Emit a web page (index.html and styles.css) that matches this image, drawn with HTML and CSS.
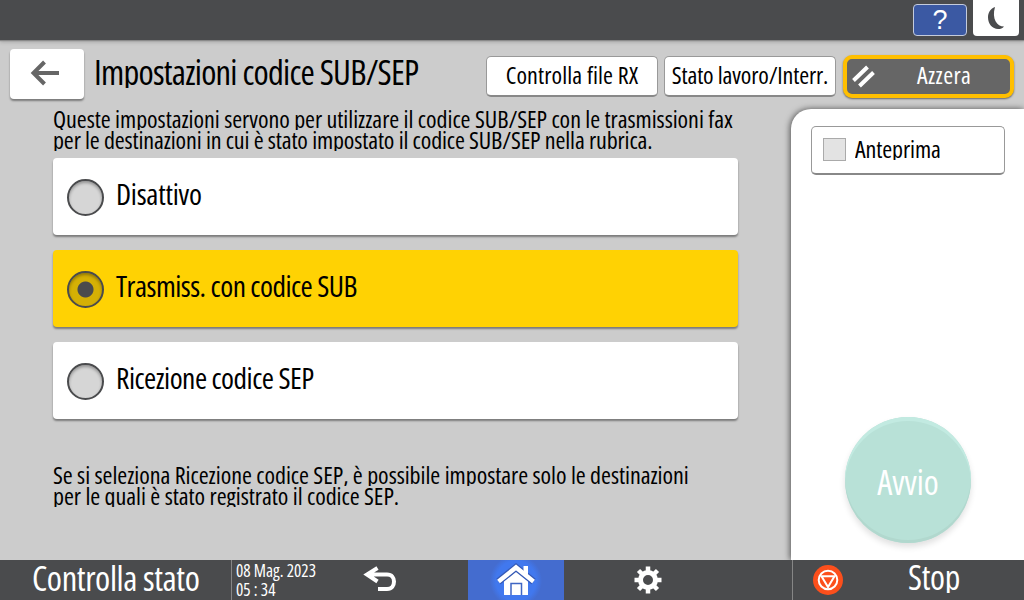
FILE: index.html
```html
<!DOCTYPE html>
<html lang="it">
<head>
    <meta charset="UTF-8">
    <meta name="viewport" content="width=device-width, initial-scale=1.0">
    <title>Impostazioni codice SUB/SEP</title>
    <link rel="stylesheet" href="styles.css">
</head>
<body>
    <!-- Top bar -->
    <div class="topbar">
        <button class="help-btn">?</button>
        <button class="sleep-btn">
            <svg width="20" height="24" viewBox="0 0 20 24"><path d="M9 1 C4 3 2 7 2 11.500 C2 18 6.500 23 12 23 C14.500 23 16.500 22.500 18 20.500 C11 20.500 5.500 13 9 1 Z" fill="#4a4b4d"/></svg>
        </button>
    </div>

    <!-- Title and commands -->
    <div class="header">
        <button class="back-btn">
            <svg width="30" height="26" viewBox="0 0 30 26"><path d="M29 13 H4 M14.500 2 L3.500 13 L14.500 24" fill="none" stroke="#666" stroke-width="4"/></svg>
        </button>
        <h1>Impostazioni codice SUB/SEP</h1>
        <button class="cmd-btn">Controlla file RX</button>
        <button class="cmd-btn status">Stato lavoro/Interr.</button>
        <button class="reset-btn">
            <svg width="23" height="24" viewBox="0 0 23 24"><path d="M1.500 15.500 L15.500 2 M7.500 21 L21.500 7.500" stroke="#fff" stroke-width="4"/></svg>
            <span>Azzera</span>
        </button>
    </div>

    <div class="main">
        <div class="content">
            <div class="text">
                <div class="line">Queste impostazioni servono per utilizzare il codice SUB/SEP con le trasmissioni fax</div>
                <div class="line tight">per le destinazioni in cui è stato impostato il codice SUB/SEP nella rubrica.</div>
            </div>

            <div class="options">
                <div class="option"><span class="radio"></span><span class="label short">Disattivo</span></div>
                <div class="option selected"><span class="radio"></span><span class="label">Trasmiss. con codice SUB</span></div>
                <div class="option"><span class="radio"></span><span class="label">Ricezione codice SEP</span></div>
            </div>

            <div class="text">
                <div class="line">Se si seleziona Ricezione codice SEP, è possibile impostare solo le destinazioni</div>
                <div class="line">per le quali è stato registrato il codice SEP.</div>
            </div>
        </div>

        <!-- Right panel -->
        <div class="panel">
            <button class="preview-btn"><span class="checkbox"></span><span class="preview-label">Anteprima</span></button>
            <button class="start-btn">Avvio</button>
        </div>
    </div>

    <!-- Bottom bar -->
    <div class="footer">
        <div class="check-status">Controlla stato</div>
        <div class="clock">
            <div>08 Mag. 2023</div>
            <div>05 : 34</div>
        </div>
        <div class="nav return">
            <svg width="34" height="28" viewBox="0 0 34 28"><path d="M14.500 2 L4 8.500 L14.500 15.500 M4 8.500 H24 C29 8.500 31 12 31 15.500 C31 19.500 29 23 24 23 H15" fill="none" stroke="#fff" stroke-width="4"/></svg>
        </div>
        <div class="nav home">
            <svg width="40" height="34" viewBox="0 0 40 34">
                <path d="M8 18 L20 8 L32 18 V32 H8 Z" fill="#fff"/>
                <path d="M2.500 18.500 L20 4.500 L37.500 18.500" fill="none" stroke="#3559b5" stroke-width="7"/>
                <path d="M27.500 3 H32 V13 H27.500 Z" fill="#fff"/>
                <path d="M2.500 18.500 L20 4.500 L37.500 18.500" fill="none" stroke="#fff" stroke-width="4.500"/>
                <path d="M15 32 V20.500 H25.500 V32" fill="#fff" stroke="#3f66c4" stroke-width="1.500"/>
            </svg>
        </div>
        <div class="nav settings">
            <svg width="28" height="28" viewBox="-14 -14 28 28">
                <circle r="7.500" fill="none" stroke="#fff" stroke-width="5"/>
                <path d="M0 -13.500 V-8 M0 13.500 V8 M-13.500 0 H-8 M13.500 0 H8 M-9.500 -9.500 L-6 -6 M9.500 -9.500 L6 -6 M-9.500 9.500 L-6 6 M9.500 9.500 L6 6" stroke="#fff" stroke-width="4.500"/>
            </svg>
        </div>
        <div class="stop">
            <svg width="30" height="30" viewBox="-15 -15 30 30">
                <circle r="15" fill="#fc4f1c"/>
                <circle r="9.300" fill="none" stroke="#fff" stroke-width="2"/>
                <path d="M-6.500 -3.800 H6.500 L0 7 Z" fill="none" stroke="#fff" stroke-width="2"/>
            </svg>
            <span>Stop</span>
        </div>
    </div>
</body>
</html>
```

FILE: styles.css
```css
* {
    box-sizing: border-box;
}
body {
    margin: 0;
    width: 1024px;
    height: 600px;
    overflow: hidden;
    display: flex;
    flex-direction: column;
    background-color: #ccc;
    color: #000;
    font-family: "Open Sans", "Noto Sans", sans-serif;
    font-stretch: 75%;
    font-size: 24px;
}
button {
    font: inherit;
    color: inherit;
    margin: 0;
    padding: 0;
    border: none;
    background-color: #fff;
    white-space: nowrap;
}
svg {
    display: block;
}

/* top bar */
.topbar {
    height: 40px;
    display: flex;
    justify-content: flex-end;
    padding-right: 5px;
    background-color: #4a4b4d;
    box-shadow: 0 1px 1px #8a8a8a, 0 2px 4px rgba(0, 0, 0, 0.2);
}
.help-btn {
    width: 54px;
    height: 32px;
    margin: 4px 6px 0 0;
    border: 1px solid #c4cbdc;
    border-radius: 4px;
    background-color: #3b59a3;
    color: #fff;
    font-family: "Liberation Sans", sans-serif;
    font-size: 27px;
    line-height: 30px;
}
.sleep-btn {
    width: 46px;
    height: 36px;
    padding-left: 13px;
    border-radius: 0 0 4px 4px;
}

/* header */
.header {
    height: 69px;
    display: flex;
    align-items: flex-start;
    padding: 9px 10px 0;
}
.back-btn {
    width: 74px;
    height: 50px;
    display: flex;
    align-items: center;
    padding: 0 0 2px 20px;
    border-radius: 4px;
    box-shadow: 0 2px 2px rgba(0, 0, 0, 0.4);
}
h1 {
    width: 402px;
    height: 38px;
    margin: 1px 0 0;
    padding-left: 10px;
    overflow: hidden;
    font-size: 34.5px;
    font-weight: 400;
    line-height: 43px;
    letter-spacing: -0.75px;
    white-space: nowrap;
}
.cmd-btn {
    width: 172px;
    height: 41px;
    margin: 7px 6px 0 0;
    padding-bottom: 2px;
    border: 1px solid #999;
    border-bottom: 2px solid #888;
    border-radius: 5px;
    line-height: 36px;
    letter-spacing: 0.12px;
}
.cmd-btn.status {
    letter-spacing: -0.15px;
}
.reset-btn {
    width: 171px;
    height: 43px;
    margin-top: 6px;
    margin-left: 1px;
    display: flex;
    align-items: center;
    padding-left: 5px;
    border: 4px solid #ffbf00;
    border-radius: 9px;
    background-color: #666;
    box-shadow: 0 1px 2px rgba(0, 0, 0, 0.5);
    color: #fff;
    letter-spacing: 0.4px;
}
.reset-btn span {
    margin-left: 42px;
    padding-bottom: 4px;
}

/* main area */
.main {
    height: 451px;
    display: flex;
}
.content {
    width: 791px;
    padding-left: 53px;
}
.line {
    height: 21px;
    overflow: hidden;
    line-height: 19px;
    white-space: nowrap;
    letter-spacing: -0.04px;
}
.line.tight {
    letter-spacing: -0.13px;
}
.options {
    width: 685px;
    margin: 7px 0 46px;
    display: flex;
    flex-direction: column;
    gap: 15px;
}
.option {
    height: 77px;
    display: flex;
    padding-left: 14px;
    background-color: #fff;
    border-radius: 4px;
    box-shadow: 0 2px 2px rgba(0, 0, 0, 0.4);
}
.option.selected {
    background-color: #ffd203;
}
.radio {
    width: 37px;
    height: 37px;
    margin: 21px 12px 0 0;
    border: 2px solid #4a4b4d;
    border-radius: 50%;
    background-color: #d6d6d6;
    box-shadow: inset 0 2px 3px rgba(0, 0, 0, 0.3);
}
.selected .radio {
    background: radial-gradient(circle, #4a4b4d 7.5px, #d5b005 8.5px);
}
.label {
    font-size: 29.5px;
    line-height: 72px;
    letter-spacing: -0.52px;
}
.label.short {
    letter-spacing: -0.25px;
}

/* right panel */
.panel {
    width: 233px;
    display: flex;
    flex-direction: column;
    align-items: flex-start;
    padding: 17px 0 0 20px;
    background-color: #fff;
    border-top-left-radius: 20px;
    box-shadow: -1px 0 6px rgba(0, 0, 0, 0.6);
}
.preview-btn {
    width: 194px;
    height: 49px;
    display: flex;
    align-items: flex-start;
    padding: 11px 0 0 11px;
    border: 1px solid #999;
    border-bottom: 2px solid #888;
    border-radius: 5px;
}
.checkbox {
    width: 23px;
    height: 23px;
    margin-right: 9px;
    border: 1px solid #aaa;
    background-color: #e3e3e3;
}
.preview-label {
    height: 22px;
    overflow: hidden;
    line-height: 21px;
    letter-spacing: -0.1px;
}
.start-btn {
    width: 126px;
    height: 126px;
    margin: 242px 0 0 34px;
    padding-top: 4px;
    border-radius: 50%;
    background-color: #b8e1d7;
    box-shadow: inset 0 4px 0 #c2eae1, inset 0 -3px 0 #b1d8ce, 0 4px 6px rgba(0, 0, 0, 0.12);
    color: #fff;
    font-size: 34px;
}

/* bottom bar */
.footer {
    height: 40px;
    display: flex;
    position: relative;
    background-color: #4a4b4d;
    color: #fff;
}
.check-status {
    width: 232px;
    padding-left: 32px;
    border-right: 1px solid #868686;
    font-size: 34.5px;
    line-height: 35px;
    letter-spacing: -0.4px;
    white-space: nowrap;
}
.clock {
    width: 104px;
    padding: 1px 0 0 4px;
    font-size: 17.2px;
    line-height: 19px;
    white-space: nowrap;
}
.clock div {
    height: 19px;
}
.nav {
    display: flex;
    align-items: center;
    justify-content: center;
}
.return {
    width: 132px;
    padding-right: 44px;
}
.home {
    width: 96px;
    background: radial-gradient(circle at 50% 52%, #4178ee 20px, #446ccf 26px);
}
.settings {
    width: 228px;
    padding-right: 60px;
}
.stop {
    flex: 1;
    display: flex;
    align-items: center;
    padding-left: 20px;
    border-left: 1px solid #868686;
}
.stop span {
    height: 33px;
    margin: -7px 0 0 65px;
    overflow: hidden;
    font-size: 34px;
    line-height: 35px;
    letter-spacing: -0.3px;
}
```
